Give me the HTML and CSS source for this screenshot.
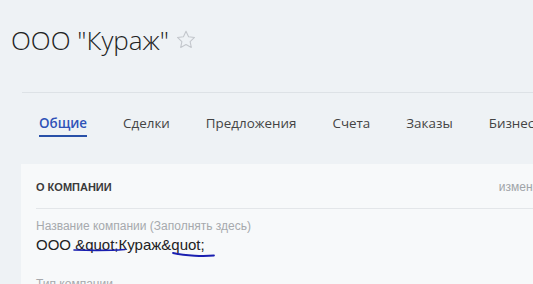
FILE: index.html
```html
<!DOCTYPE html>
<html lang="ru">
<head>
  <meta charset="UTF-8" />
  <title>ООО "Кураж"</title>
  <link rel="stylesheet" href="styles.css">
</head>
<body>

<div class="page-head">
  <h1 class="title">ООО "Кураж"</h1>
  <svg class="star" width="20" height="19" viewBox="0 0 24 23">
    <path d="M12 1.5l3.1 6.6 7.2.9-5.3 5 1.4 7.1L12 17.6l-6.4 3.5 1.4-7.1-5.3-5 7.2-.9z" fill="none" stroke="#c3c7cc" stroke-width="1.3" stroke-linejoin="round"/>
  </svg>
</div>

<div class="tabs">
  <a class="tab active">Общие</a>
  <a class="tab">Сделки</a>
  <a class="tab">Предложения</a>
  <a class="tab">Счета</a>
  <a class="tab">Заказы</a>
  <a class="tab">Бизнес-процессы</a>
</div>

<div class="card">
  <div class="card-head">
    <span class="card-title">О КОМПАНИИ</span>
    <span class="card-edit">изменить</span>
  </div>
  <div class="field">
    <div class="field-label">Название компании (Заполнять здесь)</div>
    <div class="field-value">ООО &amp;quot;Кураж&amp;quot;</div>
    <!-- пометки от руки -->
    <svg class="marks" width="200" height="30" viewBox="0 0 200 30">
      <path d="M38 14 C55 14.5, 75 14.5, 89 13.5" fill="none" stroke="#1a1fb0" stroke-width="1.6" stroke-linecap="round"/>
      <path d="M137 17 C150 20, 168 20.5, 178 19.5" fill="none" stroke="#1a1fb0" stroke-width="1.8" stroke-linecap="round"/>
    </svg>
  </div>
  <div class="field">
    <div class="field-label">Тип компании</div>
  </div>
</div>

</body>
</html>
```

FILE: styles.css
```css
* { margin: 0; padding: 0; box-sizing: border-box; }

body {
  background: #eef2f5;
  font-family: 'Liberation Sans', Arial, sans-serif;
  color: #333;
  overflow: hidden;
  height: 284px;
}

.page-head {
  display: flex;
  align-items: flex-start;
  padding: 20px 0 0 11px;
  height: 92px;
}

.title {
  font-family: 'Open Sans', sans-serif;
  font-weight: 300;
  font-size: 26px;
  line-height: 40px;
  color: #222;
}

.star {
  margin: 10px 0 0 7px;
}

.tabs {
  margin-left: 22px;
  border-top: 1px solid #dde2e6;
  display: flex;
  gap: 36px;
  padding: 20px 0 0 17px;
  height: 72px;
  white-space: nowrap;
}

.tab {
  font-family: 'Open Sans', sans-serif;
  font-size: 13.4px;
  color: #444;
  line-height: 20px;
  height: 24px;
  padding-bottom: 3px;
}

.tab.active {
  color: #2f52b8;
  font-weight: 600;
  border-bottom: 2px solid #2850a8;
}

.card {
  margin-left: 21px;
  width: 542px;
  background: #f7f9fa;
  padding: 0 0 0 15px;
  height: 200px;
}

.card-head {
  display: flex;
  justify-content: space-between;
  align-items: center;
  height: 45px;
  border-bottom: 1px solid #e3e6e9;
  padding-top: 1px;
}

.card-title {
  font-size: 11px;
  font-weight: bold;
  color: #3a3a3a;
}

.card-edit {
  font-size: 12px;
  color: #a0a4a8;
  margin-right: 12px;
}

.field {
  position: relative;
  padding-top: 10px;
}

.field-label {
  font-size: 12px;
  color: #a6a9ad;
  line-height: 15px;
}

.field-value {
  font-size: 15px;
  color: #222;
  line-height: 22px;
  height: 33px;
}

.marks {
  position: absolute;
  left: 0;
  top: 27px;
}
```
